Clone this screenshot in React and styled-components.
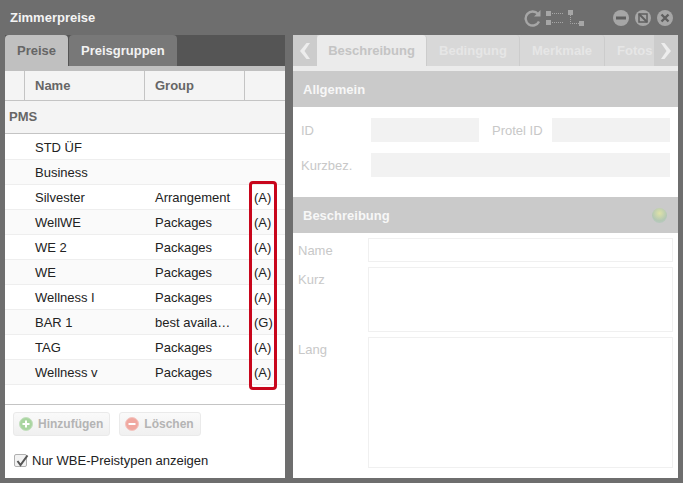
import styled, { createGlobalStyle } from "styled-components";

const rows = [
  ["STD ÜF", "", ""],
  ["Business", "", ""],
  ["Silvester", "Arrangement", "(A)"],
  ["WellWE", "Packages", "(A)"],
  ["WE 2", "Packages", "(A)"],
  ["WE", "Packages", "(A)"],
  ["Wellness I", "Packages", "(A)"],
  ["BAR 1", "best availa…", "(G)"],
  ["TAG", "Packages", "(A)"],
  ["Wellness v", "Packages", "(A)"],
];

const Chevron = ({ right }) => (
  <svg width="10" height="16" viewBox="0 0 10 16">
    <path d={right ? "M0 0H3.5L10 8L3.5 16H0L5.5 8Z" : "M10 0H6.5L0 8L6.5 16H10L4.5 8Z"} fill="#ededed" />
  </svg>
);

const App = () => {
  return (
    <>
      <GlobalStyle />
      <Window>
        <TitleBar>
          <Title>Zimmerpreise</Title>
          <Tools>
            <svg width="18" height="17" viewBox="0 0 18 17" fill="none">
              <path d="M14 4 A7 7 0 1 0 15 11.5" stroke="#a6a6a6" strokeWidth="2.4" />
              <path d="M10 6.5 L16.5 6.5 L16.5 0 Z" fill="#a6a6a6" />
            </svg>
            <svg width="17" height="15" viewBox="0 0 17 15" style={{ marginLeft: 4 }}>
              <rect x="0" y="0" width="5" height="5" fill="#a6a6a6" />
              <rect x="0" y="9" width="5" height="5" fill="#a6a6a6" />
              <path d="M6 2.5H17M6 11.5H17" stroke="#a6a6a6" strokeDasharray="1 1" />
            </svg>
            <svg width="17" height="17" viewBox="0 0 17 17" style={{ marginLeft: 5 }}>
              <rect x="0" y="0" width="5" height="5" fill="#a6a6a6" />
              <rect x="11" y="11" width="5" height="5" fill="#a6a6a6" />
              <path d="M2.5 5V13.5H11" stroke="#a6a6a6" fill="none" strokeDasharray="1 1" />
            </svg>
            <WinButtons>
              <svg width="16" height="16" viewBox="0 0 16 16">
                <circle cx="8" cy="8" r="8" fill="#a6a6a6" />
                <rect x="3" y="6.5" width="10" height="3" fill="#5f5f5f" />
              </svg>
              <svg width="16" height="16" viewBox="0 0 16 16">
                <circle cx="8" cy="8" r="8" fill="#a6a6a6" />
                <rect x="4" y="4" width="8" height="8" fill="none" stroke="#5f5f5f" strokeWidth="1.5" />
                <path d="M4 4L12 12" stroke="#5f5f5f" strokeWidth="2" />
              </svg>
              <svg width="16" height="16" viewBox="0 0 16 16">
                <circle cx="8" cy="8" r="8" fill="#a6a6a6" />
                <path d="M4.5 4.5L11.5 11.5M11.5 4.5L4.5 11.5" stroke="#5f5f5f" strokeWidth="2.4" />
              </svg>
            </WinButtons>
          </Tools>
        </TitleBar>
        <Body>
          <LeftPanel>
            <LeftTabs>
              <LeftTab $active>Preise</LeftTab>
              <LeftTab>Preisgruppen</LeftTab>
            </LeftTabs>
            <TabStrip />
            <TableHead>
              <HeadCell $w={20} />
              <HeadCell $w={120}>Name</HeadCell>
              <HeadCell $w={100}>Group</HeadCell>
            </TableHead>
            <GroupRow>PMS</GroupRow>
            <TableArea>
              {rows.map((r) => (
                <Row key={r[0]}>
                  <NameCell>{r[0]}</NameCell>
                  <GroupCell>{r[1]}</GroupCell>
                  <TypeCell>{r[2]}</TypeCell>
                </Row>
              ))}
              <Highlight />
            </TableArea>
            <LeftFooter>
              <ButtonRow>
                <ActionButton>
                  <svg width="14" height="14" viewBox="0 0 14 14">
                    <circle cx="7" cy="7" r="6.5" fill="#a9d5a0" stroke="#c5dfc0" />
                    <path d="M3.5 7H10.5M7 3.5V10.5" stroke="#fff" strokeWidth="2" />
                  </svg>
                  Hinzufügen
                </ActionButton>
                <ActionButton>
                  <svg width="14" height="14" viewBox="0 0 14 14">
                    <circle cx="7" cy="7" r="6.5" fill="#f0a8a0" stroke="#f3c5c0" />
                    <path d="M3.5 7H10.5" stroke="#fff" strokeWidth="2" />
                  </svg>
                  Löschen
                </ActionButton>
              </ButtonRow>
              <CheckRow>
                <CheckBox>
                  <svg width="14" height="14" viewBox="0 0 14 14">
                    <path d="M2.5 6L5.5 10L12.5 0.5" fill="none" stroke="#555" strokeWidth="2" />
                  </svg>
                </CheckBox>
                Nur WBE-Preistypen anzeigen
              </CheckRow>
            </LeftFooter>
          </LeftPanel>
          <RightPanel>
            <RightTabs>
              <Arrow><Chevron /></Arrow>
              <RightTab $active $w={110}>Beschreibung</RightTab>
              <RightTab $w={93}>Bedingung</RightTab>
              <RightTab $w={85}>Merkmale</RightTab>
              <LastTab>Fotos</LastTab>
              <Arrow><Chevron right /></Arrow>
            </RightTabs>
            <RightStrip />
            <SectionHead>Allgemein</SectionHead>
            <TopForm>
              <FormRow>
                <Label>ID</Label>
                <GrayInput $w={108} />
                <Label $left={13} $w={60}>Protel ID</Label>
                <GrayInput $w={118} />
              </FormRow>
              <FormRow>
                <Label>Kurzbez.</Label>
                <GrayInput $w={299} />
              </FormRow>
            </TopForm>
            <SectionHead>
              Beschreibung
              <Bulb />
            </SectionHead>
            <BottomForm>
              <DescRow $h={24}>
                <DescLabel>Name</DescLabel>
                <Field />
              </DescRow>
              <DescRow $h={65}>
                <DescLabel>Kurz</DescLabel>
                <Field />
              </DescRow>
              <DescRow $h={131}>
                <DescLabel>Lang</DescLabel>
                <Field />
              </DescRow>
            </BottomForm>
          </RightPanel>
        </Body>
      </Window>
    </>
  );
};
export default App;

const GlobalStyle = createGlobalStyle`
  html, body {
    margin: 0;
    padding: 0;
    background: #6e6e6e;
  }
  * {
    box-sizing: border-box;
  }
`;
const Window = styled.div`
  width: 683px;
  height: 483px;
  background: #6e6e6e;
  font-family: "Liberation Sans", Arial, sans-serif;
  font-size: 13px;
  overflow: hidden;
`;
const TitleBar = styled.div`
  height: 35px;
  display: flex;
  align-items: center;
  justify-content: space-between;
  padding: 0 10px 0 10px;
`;
const Title = styled.div`
  color: #f4f4f4;
  font-size: 13px;
  font-weight: bold;
`;
const Tools = styled.div`
  display: flex;
  align-items: center;
  padding-top: 1px;
`;
const WinButtons = styled.div`
  display: flex;
  gap: 6px;
  margin-left: 28px;
`;
const Body = styled.div`
  height: 443px;
  display: flex;
  gap: 8px;
  padding-left: 5px;
`;
const LeftPanel = styled.div`
  width: 280px;
  height: 443px;
  background: #fff;
  display: flex;
  flex-direction: column;
`;
const LeftTabs = styled.div`
  height: 31px;
  flex: none;
  display: flex;
  background: #555;
`;
const LeftTab = styled.div`
  height: 31px;
  width: ${(p) => (p.$active ? "63px" : "108px")};
  margin-right: ${(p) => (p.$active ? "1px" : "0")};
  padding-left: 12px;
  line-height: 31px;
  font-size: 13px;
  white-space: nowrap;
  font-weight: bold;
  color: ${(p) => (p.$active ? "#666" : "#f2f2f2")};
  background: ${(p) => (p.$active ? "#c0c0c0" : "#787878")};
  border-radius: 4px 4px 0 0;
`;
const TabStrip = styled.div`
  height: 5px;
  flex: none;
  background: #c0c0c0;
`;
const TableHead = styled.div`
  height: 30px;
  flex: none;
  display: flex;
  background: #f4f4f4;
  border-bottom: 1px solid #c4c4c4;
`;
const HeadCell = styled.div`
  width: ${(p) => p.$w}px;
  padding-left: 10px;
  line-height: 29px;
  font-size: 13px;
  font-weight: bold;
  color: #666;
  border-right: 1px solid #c4c4c4;
  &:first-child {
    width: 20px;
    padding: 0;
  }
`;
const GroupRow = styled.div`
  height: 33px;
  flex: none;
  background: #f4f4f4;
  border-bottom: 1px solid #c4c4c4;
  padding-left: 4px;
  line-height: 32px;
  font-size: 13px;
  font-weight: bold;
  color: #666;
`;
const TableArea = styled.div`
  position: relative;
  height: 271px;
  flex: none;
  padding-top: 1px;
  border-bottom: 1px solid #c4c4c4;
`;
const Row = styled.div`
  height: 25px;
  display: flex;
  align-items: center;
  padding-top: 1px;
  color: #222;
  font-size: 13px;
  border-bottom: 1px solid #eeeeee;
  &:nth-child(even) {
    background: #fafafa;
  }
`;
const NameCell = styled.div`
  width: 120px;
  margin-left: 30px;
`;
const GroupCell = styled.div`
  width: 99px;
`;
const TypeCell = styled.div`
  width: 24px;
`;
const Highlight = styled.div`
  position: absolute;
  left: 244px;
  top: 47px;
  width: 28px;
  height: 209px;
  border: 3px solid #c8061c;
  border-radius: 4px;
`;
const LeftFooter = styled.div`
  flex: 1;
  padding: 7px 8px 0;
`;
const ButtonRow = styled.div`
  display: flex;
  gap: 9px;
`;
const ActionButton = styled.div`
  height: 24px;
  display: flex;
  align-items: center;
  gap: 5px;
  padding: 0 6px 0 5px;
  border: 1px solid #eaeaea;
  border-radius: 3px;
  background: linear-gradient(#fafafa, #f0f0f0);
  color: #b4b4b4;
  font-size: 12px;
  font-weight: bold;
`;
const CheckRow = styled.div`
  display: flex;
  align-items: center;
  gap: 5px;
  margin-top: 17px;
  padding-left: 1px;
  color: #222;
  font-size: 13px;
`;
const CheckBox = styled.div`
  width: 13px;
  height: 13px;
  border: 1px solid #b0b0b0;
  border-radius: 2px;
  background: #f2f2f2;
  line-height: 0;
`;
const RightPanel = styled.div`
  width: 385px;
  height: 443px;
  background: #fff;
  display: flex;
  flex-direction: column;
`;
const RightTabs = styled.div`
  height: 31px;
  flex: none;
  display: flex;
  background: #d8d8d8;
`;
const Arrow = styled.div`
  width: 24px;
  flex: none;
  display: flex;
  align-items: center;
  justify-content: center;
  background: #cccccc;
`;
const RightTab = styled.div`
  width: ${(p) => p.$w}px;
  flex: none;
  text-align: center;
  line-height: 31px;
  font-size: 13px;
  font-weight: bold;
  color: ${(p) => (p.$active ? "#c4c4c4" : "#e6e6e6")};
  background: ${(p) => (p.$active ? "#ebebeb" : "#d8d8d8")};
  border-right: 1px solid #cccccc;
  border-radius: 4px 4px 0 0;
`;
const LastTab = styled.div`
  flex: 1;
  overflow: hidden;
  white-space: nowrap;
  padding-left: 12px;
  line-height: 31px;
  font-size: 13px;
  font-weight: bold;
  color: #e6e6e6;
`;
const RightStrip = styled.div`
  height: 5px;
  flex: none;
  background: #ebebeb;
`;
const SectionHead = styled.div`
  height: 36px;
  flex: none;
  display: flex;
  align-items: center;
  justify-content: space-between;
  background: #cacaca;
  color: #f7f7f7;
  font-size: 13px;
  font-weight: bold;
  padding: 0 11px 0 10px;
`;
const Bulb = styled.div`
  width: 15px;
  height: 15px;
  border-radius: 50%;
  background: radial-gradient(circle at 50% 35%, #dfe2a8, #b4c8b4 60%, #bccaca);
`;
const TopForm = styled.div`
  height: 90px;
  flex: none;
  padding-top: 11px;
  display: flex;
  flex-direction: column;
  gap: 11px;
`;
const FormRow = styled.div`
  height: 24px;
  display: flex;
  align-items: center;
  padding-left: 8px;
`;
const Label = styled.div`
  width: ${(p) => p.$w || 70}px;
  margin-left: ${(p) => p.$left || 0}px;
  color: #c8c8c8;
  font-size: 13px;
`;
const GrayInput = styled.div`
  width: ${(p) => p.$w}px;
  height: 24px;
  background: #f2f2f2;
`;
const BottomForm = styled.div`
  flex: 1;
  padding: 5px 5px 0;
  display: flex;
  flex-direction: column;
  gap: 5px;
`;
const DescRow = styled.div`
  height: ${(p) => p.$h}px;
  display: flex;
`;
const DescLabel = styled.div`
  width: 70px;
  color: #c8c8c8;
  font-size: 13px;
  line-height: 26px;
`;
const Field = styled.div`
  flex: 1;
  border: 1px solid #f0f0f0;
`;
